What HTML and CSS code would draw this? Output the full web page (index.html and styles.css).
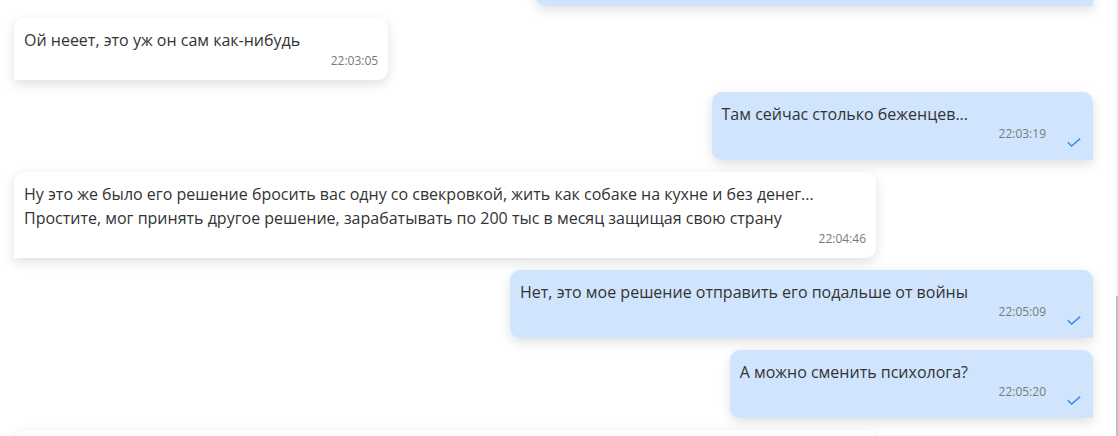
FILE: index.html
```html
<!DOCTYPE html>
<html lang="ru">
<head>
<meta charset="utf-8">
<title>Чат</title>
<link rel="stylesheet" href="styles.css">
</head>
<body>
<div class="app">
  <div class="chat">
    <div class="list">
      <div class="msg msg-out">
        <div class="msg-text">Я понимаю, но мне всё равно очень страшно за него!<span class="spacer"></span></div>
        <div class="meta"><span class="time">22:02:51</span><svg class="check" viewBox="0 0 14 9" width="14" height="9"><path d="M0.8 4.2 L4.6 8 L13.2 0.6"/></svg></div>
      </div>
      <div class="msg msg-in">
        <div class="msg-text">Ой нееет, это уж он сам как-нибудь<span class="spacer"></span></div>
        <div class="meta"><span class="time">22:03:05</span></div>
      </div>
      <div class="msg msg-out">
        <div class="msg-text">Там сейчас столько беженцев...<span class="spacer"></span></div>
        <div class="meta"><span class="time">22:03:19</span><svg class="check" viewBox="0 0 14 9" width="14" height="9"><path d="M0.8 4.2 L4.6 8 L13.2 0.6"/></svg></div>
      </div>
      <div class="msg msg-in">
        <div class="msg-text">Ну это же было его решение бросить вас одну со свекровкой, жить как собаке на кухне и без денег... Простите, мог принять другое решение, зарабатывать по 200 тыс в месяц защищая свою страну<span class="spacer"></span></div>
        <div class="meta"><span class="time">22:04:46</span></div>
      </div>
      <div class="msg msg-out">
        <div class="msg-text">Нет, это мое решение отправить его подальше от войны<span class="spacer"></span></div>
        <div class="meta"><span class="time">22:05:09</span><svg class="check" viewBox="0 0 14 9" width="14" height="9"><path d="M0.8 4.2 L4.6 8 L13.2 0.6"/></svg></div>
      </div>
      <div class="msg msg-out">
        <div class="msg-text">А можно сменить психолога?<span class="spacer"></span></div>
        <div class="meta"><span class="time">22:05:20</span><svg class="check" viewBox="0 0 14 9" width="14" height="9"><path d="M0.8 4.2 L4.6 8 L13.2 0.6"/></svg></div>
      </div>
      <div class="msg msg-in">
        <div class="msg-text">Конечно, вы можете выбрать другого специалиста в любой момент. Для этого напишите в поддержку, и вам подберут психолога, который подойдёт именно вам<span class="spacer"></span></div>
        <div class="meta"><span class="time">22:06:02</span></div>
      </div>
    </div>
  </div>
  <div class="scrollbar"><div class="thumb"></div></div>
</div>
</body>
</html>
```
FILE: styles.css
```css
html, body {
  margin: 0;
  padding: 0;
  height: 100%;
  overflow: hidden;
  background: #ffffff;
}

body {
  font-family: "Open Sans", "Noto Sans", sans-serif;
  color: #333333;
}

.app {
  display: flex;
  height: 436px;
}

.chat {
  flex: 1;
  overflow: hidden;
  padding: 0 23px 0 14px;
}

.list {
  display: flex;
  flex-direction: column;
  gap: 12px;
  margin-top: -62px;
}

.msg {
  max-width: 862px;
  box-sizing: border-box;
  padding: 10px;
  border-radius: 10px;
  box-shadow: 0 4px 12px rgba(0, 0, 0, 0.13);
}

.msg-in {
  align-self: flex-start;
  background: #ffffff;
  border-bottom-left-radius: 0;
}

.msg-out {
  align-self: flex-end;
  background: #d0e5fd;
  border-bottom-right-radius: 0;
}

.msg-text {
  font-size: 16px;
  line-height: 24px;
}

.spacer {
  display: inline-block;
  width: 78px;
  height: 1px;
}

.msg-out .spacer {
  width: 115px;
}

.meta {
  display: flex;
  justify-content: flex-end;
  align-items: flex-start;
}

.msg-in .meta {
  height: 17px;
  padding-top: 1px;
}

.msg-out .meta {
  height: 24px;
}

.time {
  font-size: 12px;
  line-height: 16px;
  color: #7a7a7a;
}

.check {
  margin: 12px 2px 0 21px;
  fill: none;
  stroke: #2d8cf0;
  stroke-width: 1.4;
}

.scrollbar {
  width: 2px;
  background: #f1f1f1;
  display: flex;
  flex-direction: column;
  justify-content: flex-end;
}

.thumb {
  height: 140px;
  background: #c1c1c1;
}
```
